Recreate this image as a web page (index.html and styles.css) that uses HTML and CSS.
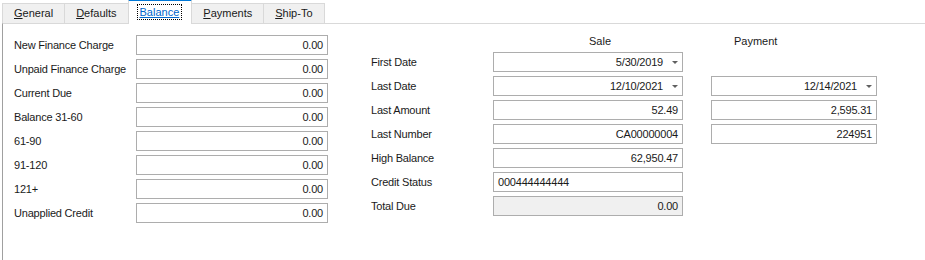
FILE: index.html
```html
<!DOCTYPE html>
<html lang="en">
<head>
  <meta charset="UTF-8" />
  <title>Customer - Balance</title>
  <link rel="stylesheet" href="styles.css">
</head>
<body>
  <div class="tabs">
    <div class="tab"><u>G</u>eneral</div>
    <div class="tab"><u>D</u>efaults</div>
    <div class="tab active"><span class="focus">Balance</span></div>
    <div class="tab"><u>P</u>ayments</div>
    <div class="tab"><u>S</u>hip-To</div>
  </div>

  <div class="page">
    <div class="grid aging">
      <label>New Finance Charge</label><div class="box num">0.00</div>
      <label>Unpaid Finance Charge</label><div class="box num">0.00</div>
      <label>Current Due</label><div class="box num">0.00</div>
      <label>Balance 31-60</label><div class="box num">0.00</div>
      <label>61-90</label><div class="box num">0.00</div>
      <label>91-120</label><div class="box num">0.00</div>
      <label>121+</label><div class="box num">0.00</div>
      <label>Unapplied Credit</label><div class="box num">0.00</div>
    </div>

    <div class="grid history">
      <span></span><div class="head sale-head">Sale</div><span></span><div class="head pay-head">Payment</div>

      <label>First Date</label>
      <div class="box date">5/30/2019<i class="arrow"></i></div>
      <span></span><span></span>

      <label>Last Date</label>
      <div class="box date">12/10/2021<i class="arrow"></i></div>
      <span></span>
      <div class="box date">12/14/2021<i class="arrow"></i></div>

      <label>Last Amount</label>
      <div class="box num">52.49</div>
      <span></span>
      <div class="box num">2,595.31</div>

      <label>Last Number</label>
      <div class="box num">CA00000004</div>
      <span></span>
      <div class="box num">224951</div>

      <label>High Balance</label>
      <div class="box num">62,950.47</div>
      <span></span><span></span>

      <label>Credit Status</label>
      <div class="box">000444444444</div>
      <span></span><span></span>

      <label>Total Due</label>
      <div class="box num readonly">0.00</div>
      <span></span><span></span>
    </div>
  </div>
</body>
</html>
```

FILE: styles.css
```css
html, body {
  height: 100%;
  overflow: hidden;
}

body {
  margin: 0;
  padding-left: 2px;
  font-family: "Liberation Sans", Arial, sans-serif;
  font-size: 11px;
  color: #1a1a1a;
  background: #fff;
}

.tabs {
  display: flex;
  align-items: flex-end;
  height: 23px;
}

.tab {
  height: 19px;
  line-height: 19px;
  padding: 0 11px;
  background: #f0f0f0;
  border: 1px solid #d9d9d9;
  border-bottom: none;
  margin-right: -1px;
}

.tab.active {
  position: relative;
  z-index: 1;
  height: 23px;
  line-height: 23px;
  margin-bottom: -1px;
  padding: 0 10px 0 9px;
  background: #fff;
  border-top: 2px solid #0078d7;
  border-color: #0078d7 #d9d9d9 #d9d9d9;
}

.focus {
  color: #0066cc;
  text-decoration: underline;
  outline: 1px dotted #000;
  padding: 1px 2px;
}

.page {
  box-sizing: border-box;
  display: flex;
  gap: 43px;
  height: calc(100% - 23px);
  padding: 11px 0 0 11px;
  border-top: 1px solid #d9d9d9;
  border-left: 1px solid #a0a0a0;
}

.grid {
  display: grid;
  row-gap: 4px;
  grid-auto-rows: 20px;
  align-items: center;
  align-self: flex-start;
}

.aging {
  grid-template-columns: 122px 192px;
}

.history {
  grid-template-columns: 122px 190px 28px 166px;
  grid-template-rows: 13px;
}

.head {
  line-height: 13px;
}

.sale-head {
  margin-left: 96px;
}

.pay-head {
  margin-left: 23px;
}

label {
  white-space: nowrap;
  letter-spacing: -0.2px;
}

.box {
  box-sizing: border-box;
  height: 20px;
  line-height: 18px;
  padding: 0 4px;
  border: 1px solid #adadad;
  background: #fff;
  white-space: nowrap;
  letter-spacing: -0.2px;
}

.num {
  text-align: right;
}

.readonly {
  background: #f0f0f0;
}

.date {
  display: flex;
  justify-content: flex-end;
  align-items: center;
  padding-right: 4px;
}

.arrow {
  width: 0;
  height: 0;
  margin-left: 9px;
  border-left: 3px solid transparent;
  border-right: 3px solid transparent;
  border-top: 3px solid #606060;
}
```
